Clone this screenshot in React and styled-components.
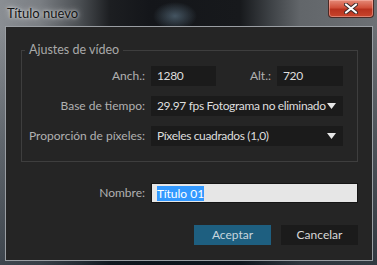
import React from "react";
import styled, { createGlobalStyle } from "styled-components";

const Global = createGlobalStyle`
  html, body { margin: 0; padding: 0; background: #1a1d21; }
  body { font-family: Lato, "Open Sans", sans-serif; }
  * { box-sizing: border-box; }
`;

const Window = styled.div`
  width: 377px;
  height: 265px;
  display: flex;
  flex-direction: column;
  padding: 0 4px 4px 5px;
  background:
    linear-gradient(to bottom, rgba(0,0,0,0) 0px, rgba(0,0,0,0) 26px, rgba(20,30,40,0.35) 140px, rgba(10,20,30,0.6) 265px),
    radial-gradient(ellipse 22px 14px at 175px 16px, rgba(80,100,115,0.8), rgba(80,100,115,0) 100%),
    linear-gradient(to right, #8a8e93 0px, #7a7e83 40px, #4a4e52 80px, #1c1e21 110px, #14161a 150px, #17191c 240px, #3d4145 270px, #62666a 300px, #6c7074 377px);
`;

const TitleBar = styled.div`
  height: 26px;
  display: flex;
  align-items: flex-start;
  justify-content: space-between;
`;

const Title = styled.span`
  margin-top: 5px;
  margin-left: 2px;
  font-size: 13px;
  line-height: 16px;
  color: #141414;
  text-shadow: 0 0 6px rgba(255,255,255,0.8), 0 0 3px rgba(255,255,255,0.7);
`;

const CloseButton = styled.div`
  width: 46px;
  height: 18px;
  margin-right: -1px;
  border: 1px solid #4a2a26;
  border-top: none;
  border-radius: 0 0 4px 4px;
  background: linear-gradient(to bottom, #e58a78 0%, #d0503a 45%, #b8321e 55%, #c8452c 100%);
  box-shadow: inset 0 0 0 1px rgba(255,200,190,0.45);
  display: flex;
  align-items: center;
  justify-content: center;
`;

const Client = styled.div`
  flex: 1;
  border: 1px solid #9a9ea3;
  background: #252525;
  padding: 15px 14px 15px 15px;
  display: flex;
  flex-direction: column;
  color: #b1b1b1;
  font-size: 12px;
`;

const Group = styled.fieldset`
  margin: 0;
  padding: 8px 14px 15px 0;
  border: 1px solid #3e3e3e;
  min-inline-size: 0;
  display: grid;
  grid-template-columns: 123px 192px;
  column-gap: 6px;
  row-gap: 10px;
`;

const Legend = styled.legend`
  margin-left: 3px;
  padding: 0 4px;
  line-height: 16px;
  font-size: 12.5px;
  color: #a9a9a9;
`;

const Label = styled.span`
  height: 20px;
  line-height: 20px;
  text-align: right;
  white-space: nowrap;
  color: #b1b1b1;
`;

const FieldRow = styled.div`
  display: flex;
  align-items: center;
  gap: 6px;
`;

const Field = styled.div`
  height: 20px;
  width: ${(p) => p.$w || "100%"};
  flex: ${(p) => (p.$w ? "none" : "1")};
  background: #1b1b1b;
  color: #dedede;
  line-height: 20px;
  letter-spacing: -0.35px;
  padding: 0 7px 0 6px;
  display: flex;
  align-items: center;
  justify-content: space-between;
  white-space: nowrap;
`;

const InlineLabel = styled(Label)`
  flex: 1;
`;

const Arrow = styled.svg`
  flex: none;
`;

const NameRow = styled.div`
  margin-top: 21px;
  display: grid;
  grid-template-columns: 124px 207px;
  column-gap: 6px;
`;

const NameInput = styled.div`
  height: 20px;
  background: #e6e6e6;
  border: 1px solid #151515;
  padding: 0 0 0 5px;
  display: flex;
  align-items: center;
`;

const Selected = styled.span`
  background: #3399ff;
  color: #ffffff;
  line-height: 15px;
`;

const Buttons = styled.div`
  margin-top: auto;
  display: flex;
  justify-content: flex-end;
  gap: 10px;
`;

const Button = styled.div`
  width: 77px;
  height: 20px;
  line-height: 20px;
  text-align: center;
  background: ${(p) => (p.$primary ? "#1e5f80" : "#1b1b1b")};
  color: ${(p) => (p.$primary ? "#c8d6de" : "#d8d8d8")};
`;

const Dropdown = () => (
  <Arrow width="9" height="6" viewBox="0 0 9 6">
    <path d="M0 0 H9 L4.5 6 Z" fill="#e6e6e6" />
  </Arrow>
);

export default function App() {
  return (
    <>
      <Global />
      <Window>
        <TitleBar>
          <Title>Título nuevo</Title>
          <CloseButton>
            <svg width="14" height="11" viewBox="0 0 14 11">
              <path d="M2 1.5 L12 9.5 M12 1.5 L2 9.5" stroke="#3a2a2a" strokeWidth="4" strokeLinecap="round" />
              <path d="M2 1.5 L12 9.5 M12 1.5 L2 9.5" stroke="#ffffff" strokeWidth="2.2" strokeLinecap="round" />
            </svg>
          </CloseButton>
        </TitleBar>
        <Client>
          <Group>
            <Legend>Ajustes de vídeo</Legend>
            <Label>Anch.:</Label>
            <FieldRow>
              <Field $w="65px">1280</Field>
              <InlineLabel>Alt.:</InlineLabel>
              <Field $w="66px">720</Field>
            </FieldRow>
            <Label>Base de tiempo:</Label>
            <Field>
              29.97 fps Fotograma no eliminado
              <Dropdown />
            </Field>
            <Label>Proporción de píxeles:</Label>
            <Field>
              Píxeles cuadrados (1,0)
              <Dropdown />
            </Field>
          </Group>
          <NameRow>
            <Label>Nombre:</Label>
            <NameInput>
              <Selected>Título 01</Selected>
            </NameInput>
          </NameRow>
          <Buttons>
            <Button $primary>Aceptar</Button>
            <Button>Cancelar</Button>
          </Buttons>
        </Client>
      </Window>
    </>
  );
}
